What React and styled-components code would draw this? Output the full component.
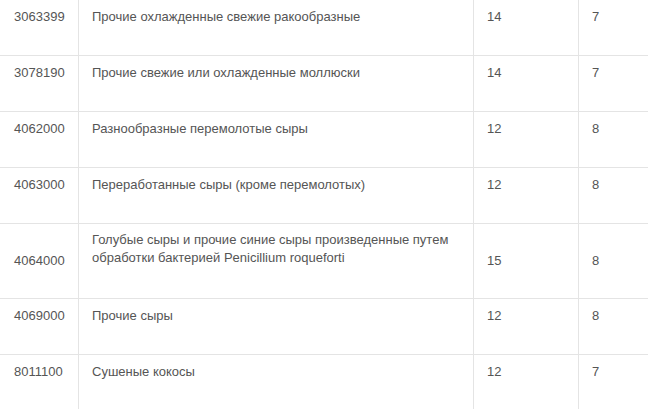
import React from "react";
import styled, { createGlobalStyle } from "styled-components";

const Global = createGlobalStyle`
  html, body { margin: 0; padding: 0; background: #fff; }
  body {
    font-family: "Liberation Sans", Arial, sans-serif;
    font-size: 13px;
    color: #555;
  }
`;

const Table = styled.div`
  width: 648px;
  overflow: hidden;
`;

const Row = styled.div`
  display: grid;
  grid-template-columns: 78px 395px 105px 1fr;
  min-height: ${(p) => (p.$tall ? 74 : 55)}px;
  border-bottom: 1px solid #e4e4e4;
`;

const Cell = styled.div`
  padding: ${(p) => (p.$tall ? "7px" : "8px")} 13px 0;
  line-height: 18px;
  border-left: 1px solid #e4e4e4;
  display: flex;
  align-items: ${(p) => (p.$center ? "center" : "flex-start")};
  ${(p) => (p.$center ? "padding-top: 0;" : "")}
  &:first-child {
    border-left: none;
    padding-left: 14px;
  }
`;

const rows = [
  ["3063399", "Прочие охлажденные свежие ракообразные", "14", "7"],
  ["3078190", "Прочие свежие или охлажденные моллюски", "14", "7"],
  ["4062000", "Разнообразные перемолотые сыры", "12", "8"],
  ["4063000", "Переработанные сыры (кроме перемолотых)", "12", "8"],
  [
    "4064000",
    "Голубые сыры и прочие синие сыры произведенные путем обработки бактерией Penicillium roqueforti",
    "15",
    "8",
    true,
  ],
  ["4069000", "Прочие сыры", "12", "8"],
  ["8011100", "Сушеные кокосы", "12", "7"],
];

export default function App() {
  return (
    <>
      <Global />
      <Table>
        {rows.map(([code, name, a, b, tall]) => (
          <Row key={code} $tall={tall}>
            <Cell $center={tall}>{code}</Cell>
            <Cell $tall={tall}>{name}</Cell>
            <Cell $center={tall}>{a}</Cell>
            <Cell $center={tall}>{b}</Cell>
          </Row>
        ))}
      </Table>
    </>
  );
}
